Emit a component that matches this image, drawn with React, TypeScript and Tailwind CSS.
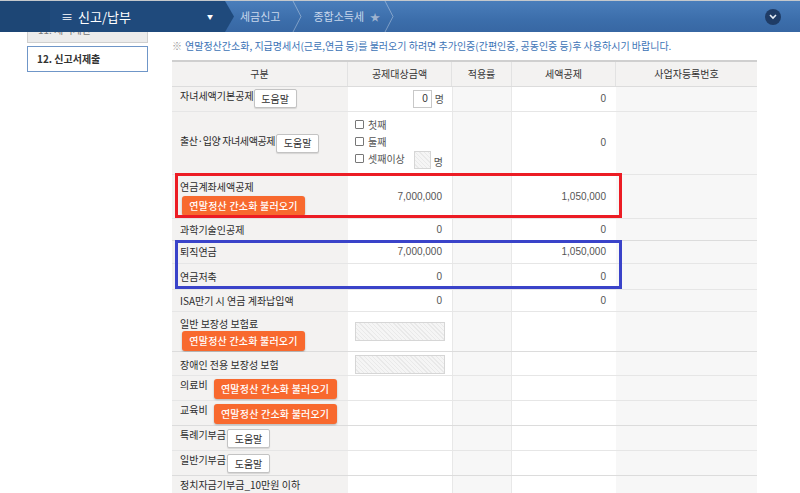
import React from "react";

const HelpBtn = ({ className = "" }: { className?: string }) => (
  <button
    className={
      "h-[19px] w-[43px] shrink-0 rounded-[2px] border border-[#c3c3c3] bg-white text-[10px] leading-none text-[#333] shadow-[0_1px_1px_rgba(0,0,0,0.12)] " +
      className
    }
  >
    도움말
  </button>
);

const OrangeBtn = ({ className = "" }: { className?: string }) => (
  <button
    className={
      "h-[20px] w-[123px] shrink-0 rounded-[3px] bg-[#f8692e] text-[10px] font-medium leading-none tracking-[0.02em] text-white shadow-[0_1px_2px_rgba(0,0,0,0.25)] " +
      className
    }
  >
    연말정산 간소화 불러오기
  </button>
);

const Hatch = ({ className = "" }: { className?: string }) => (
  <div
    className={
      "border border-[#d6d6d6] bg-[repeating-linear-gradient(45deg,#f5f5f5_0px,#f5f5f5_2px,#e9e9e9_2px,#e9e9e9_3px)] " +
      className
    }
  />
);

const Check = ({ label, children }: { label: string; children?: React.ReactNode }) => (
  <div className="flex h-[17px] items-center">
    <span className="mr-[4px] h-[9px] w-[9px] rounded-[1px] border border-[#777] bg-white" />
    <span>{label}</span>
    {children}
  </div>
);

type RowProps = {
  hc: string;
  label: React.ReactNode;
  amount?: React.ReactNode;
  credit?: React.ReactNode;
  amountCls?: string;
  creditCls?: string;
  border?: string;
};

const Row = ({ hc, label, amount, credit, amountCls = "", creditCls = "", border = "border-[#e6e6e6]" }: RowProps) => (
  <div className={"flex border-b " + border + " " + hc}>
    <div className="w-[176px] shrink-0 bg-[#f3f2f1] pl-[8px] text-[#2b2b2b]">{label}</div>
    <div className={"flex w-[104px] shrink-0 bg-white text-[#555] " + amountCls}>{amount}</div>
    <div className="w-[60px] shrink-0 border-x border-[#e8e8e8] bg-[#f7f7f7]" />
    <div className={"flex w-[104px] shrink-0 bg-white text-[#555] " + creditCls}>{credit}</div>
    <div className="w-[141px] shrink-0 bg-[#f7f7f7]" />
  </div>
);

const Num = ({ v }: { v: string }) => (
  <div className="flex w-full items-center justify-end pr-[10px] font-['Liberation_Sans',sans-serif] text-[10px]">{v}</div>
);

export default function App() {
  return (
    <div className="relative h-[493px] w-[800px] overflow-hidden bg-white font-['Noto_Sans_CJK_KR','Liberation_Sans',sans-serif] text-[10px] leading-[14px]">
      {/* top bar */}
      <div className="relative z-10 flex h-[32px] border-t border-[#c4c8cc] bg-[linear-gradient(180deg,#4a7ebb_0%,#3c6eab_60%,#3767a3_100%)]">
        <div className="relative flex w-[225px] shrink-0 items-center bg-[#1f4a7c]">
          <div className="h-full w-[50px] bg-[#1d4675]" />
          <span className="ml-[11px] text-[12px] leading-none text-white">≡</span>
          <span className="ml-[5px] text-[13px] leading-none text-white">신고/납부</span>
          <span className="ml-auto mr-[12px] text-[6px] leading-none text-white">▼</span>
          <svg className="absolute right-[-9px] top-0 h-full w-[9px]" viewBox="0 0 9 31" preserveAspectRatio="none">
            <polygon points="0,0 9,15.5 0,31" fill="#1f4a7c" />
          </svg>
        </div>
        <div className="flex items-center">
          <span className="ml-[15px] text-[11px] leading-none text-[#c9d8ec]">세금신고</span>
          <svg className="ml-[12px] h-[31px] w-[10px]" viewBox="0 0 10 31">
            <polyline points="1,0 9,15.5 1,31" fill="none" stroke="rgba(255,255,255,0.35)" strokeWidth="1" />
          </svg>
          <span className="ml-[11px] text-[11px] leading-none text-[#c9d8ec]">종합소득세</span>
          <span className="ml-[6px] text-[10px] leading-none text-[#9fb3cf]">★</span>
          <svg className="ml-[4px] h-[31px] w-[10px]" viewBox="0 0 10 31">
            <polyline points="1,0 9,15.5 1,31" fill="none" stroke="rgba(255,255,255,0.35)" strokeWidth="1" />
          </svg>
        </div>
        <div className="ml-auto mr-[19px] flex items-center">
          <span className="flex h-[16px] w-[16px] items-center justify-center rounded-full bg-[#1f3c66]">
            <svg width="8" height="6" viewBox="0 0 8 6">
              <polyline points="1,1 4,4 7,1" fill="none" stroke="#e6edf6" strokeWidth="1.6" />
            </svg>
          </span>
        </div>
      </div>

      <div className="flex">
        {/* sidebar */}
        <div className="w-[172px] shrink-0 pl-[27px]">
          <div className="h-[11px] w-[121px] overflow-hidden">
            <div className="mt-[-15px] flex h-[26px] w-[121px] items-center border border-[#cfcfcf] bg-[#ececec] pl-[10px] text-[#777]">
              11. 세액계산
            </div>
          </div>
          <div className="mt-[3px] flex h-[26px] w-[121px] items-center border border-[#6f96c8] bg-white pl-[9px] font-bold text-[#333]">
            12. 신고서제출
          </div>
        </div>

        {/* content */}
        <div className="w-[585px] shrink-0">
          <div className="flex h-[28px] items-center whitespace-nowrap text-[10px] text-[#3c73b6]">
            <span className="mr-[3px] text-[#999]">※</span>
            연말정산간소화, 지급명세서(근로,연금 등)를 불러오기 하려면 추가인증(간편인증, 공동인증 등)후 사용하시기 바랍니다.
          </div>

          <div className="border-t-2 border-[#cfcfcf]">
            {/* header */}
            <div className="flex h-[25px] border-b border-[#dcdcdc] bg-[#f3f2f1] text-[#333]">
              <div className="flex w-[176px] items-center justify-center border-r border-[#e2e2e2]">구분</div>
              <div className="flex w-[104px] items-center justify-center border-r border-[#e2e2e2]">공제대상금액</div>
              <div className="flex w-[60px] items-center justify-center border-r border-[#e2e2e2]">적용률</div>
              <div className="flex w-[104px] items-center justify-center border-r border-[#e2e2e2]">세액공제</div>
              <div className="flex w-[141px] items-center justify-center">사업자등록번호</div>
            </div>

            <Row
              hc="h-[25px]"
              label={
                <div className="flex items-start pt-[1px]">
                  <span className="mt-[1px]">자녀세액기본공제</span>
                  <HelpBtn className="ml-[0px] mt-[1px]" />
                </div>
              }
              amount={
                <div className="flex w-full items-center justify-end pr-[8px]">
                  <div className="flex h-[18px] w-[19px] items-center justify-end border border-[#c8c8c8] bg-white pr-[3px] font-['Liberation_Sans',sans-serif] text-[#333]">
                    0
                  </div>
                  <span className="ml-[3px] text-[#555]">명</span>
                </div>
              }
              credit={<Num v="0" />}
            />
            <Row
              hc="h-[63px]"
              label={
                <div className="flex h-full items-center">
                  <span className="mb-[4px] tracking-[-0.4px]">출산·입양 자녀세액공제</span>
                  <HelpBtn className="ml-[1px]" />
                </div>
              }
              amount={
                <div className="pl-[7px] pt-[4px] text-[#555]">
                  <Check label="첫째" />
                  <Check label="둘째" />
                  <Check label="셋째이상">
                    <Hatch className="ml-[9px] mt-[3px] h-[18px] w-[17px]" />
                    <span className="ml-[3px] mt-[6px]">명</span>
                  </Check>
                </div>
              }
              credit={<Num v="0" />}
            />
            <Row
              hc="h-[44px]"
              label={
                <div className="pt-[5px]">
                  <div>연금계좌세액공제</div>
                  <OrangeBtn className="ml-[2px] mt-[2px]" />
                </div>
              }
              amount={<Num v="7,000,000" />}
              credit={<Num v="1,050,000" />}
            />
            <Row
              hc="h-[22px]"
              border="border-[#dcdcdc]"
              label={<div className="flex h-full items-center">과학기술인공제</div>}
              amount={<Num v="0" />}
              credit={<Num v="0" />}
            />
            <Row
              hc="h-[23px]"
              label={<div className="flex h-full items-center">퇴직연금</div>}
              amount={<Num v="7,000,000" />}
              credit={<Num v="1,050,000" />}
            />
            <Row
              hc="h-[26px]"
              label={<div className="flex h-full items-center">연금저축</div>}
              amount={<Num v="0" />}
              credit={<Num v="0" />}
            />
            <Row
              hc="h-[22px]"
              label={<div className="flex h-full items-center">ISA만기 시 연금 계좌납입액</div>}
              amount={<Num v="0" />}
              credit={<Num v="0" />}
            />
            <Row
              hc="h-[40px]"
              border="border-[#dcdcdc]"
              label={
                <div className="pt-[5px]">
                  <div>일반 보장성 보험료</div>
                  <OrangeBtn className="ml-[2px] mt-[0px]" />
                </div>
              }
              amount={<Hatch className="ml-[7px] mt-[10px] h-[19px] w-[90px]" />}
            />
            <Row
              hc="h-[24px]"
              label={<div className="flex h-full items-center pt-[3px]">장애인 전용 보장성 보험</div>}
              amount={<Hatch className="ml-[7px] mt-[3px] h-[19px] w-[90px]" />}
            />
            <Row
              hc="h-[25px]"
              label={
                <div className="flex items-start pt-[1px]">
                  <span className="mt-[1px]">의료비</span>
                  <OrangeBtn className="ml-[6px] mt-[2px]" />
                </div>
              }
            />
            <Row
              hc="h-[25px]"
              border="border-[#dcdcdc]"
              label={
                <div className="flex items-start pt-[1px]">
                  <span className="mt-[1px]">교육비</span>
                  <OrangeBtn className="ml-[6px] mt-[2px]" />
                </div>
              }
            />
            <Row
              hc="h-[25px]"
              label={
                <div className="flex items-start pt-[1px]">
                  <span className="mt-[1px]">특례기부금</span>
                  <HelpBtn className="ml-[1px] mt-[2px]" />
                </div>
              }
            />
            <Row
              hc="h-[25px]"
              border="border-[#dcdcdc]"
              label={
                <div className="flex items-start pt-[1px]">
                  <span className="mt-[1px]">일반기부금</span>
                  <HelpBtn className="ml-[1px] mt-[2px]" />
                </div>
              }
            />
            <Row
              hc="h-[40px]"
              label={
                <div className="pt-[2px]">
                  <div>정치자금기부금_10만원 이하</div>
                  <div className="mt-[1px] h-[18px] w-[43px] rounded-[2px] border border-[#c3c3c3] bg-white" />
                </div>
              }
            />
          </div>
        </div>
      </div>

      {/* annotation boxes */}
      <div className="pointer-events-none absolute left-[175px] top-[173px] h-[45px] w-[447px] border-[3px] border-[#ec1c24]" />
      <div className="pointer-events-none absolute left-[175px] top-[240px] h-[49px] w-[447px] border-[3px] border-[#3a43c9]" />
    </div>
  );
}
